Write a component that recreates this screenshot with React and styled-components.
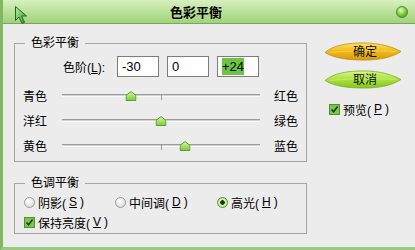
import React from 'react'
import styled, { createGlobalStyle } from 'styled-components'

const GlobalStyle = createGlobalStyle`
  html, body {
    margin: 0;
    padding: 0;
    background: #ececec;
  }
  body {
    font-family: 'Liberation Sans', 'Noto Sans CJK SC', sans-serif;
    font-size: 12px;
    color: #000;
  }
`

const sliders = [
  { left: '青色', right: '红色', value: -30 },
  { left: '洋红', right: '绿色', value: 0 },
  { left: '黄色', right: '蓝色', value: 24 },
]

const Cursor = () => (
  <CursorWrap>
    <svg width="14" height="20" viewBox="0 0 14 20">
      <defs>
        <linearGradient id="cur" x1="0" y1="0" x2="1" y2="1">
          <stop offset="0" stopColor="#b8f09a" />
          <stop offset="1" stopColor="#2e9a30" />
        </linearGradient>
      </defs>
      <path
        d="M1.5 1.5 L1.5 15.5 L5 12 L8 18.5 L10.5 17.3 L7.6 11 L12.5 11 Z"
        fill="url(#cur)"
        stroke="#1d6a1f"
        strokeWidth="1"
        strokeLinejoin="round"
      />
    </svg>
  </CursorWrap>
)

const Leaf = ({ tone }) => {
  const c =
    tone === 'gold'
      ? ['#fbe070', '#f2bc1c', '#d99a0a', '#c38a12']
      : ['#dcf68c', '#ade444', '#84c422', '#76ae1e']
  return (
    <LeafSvg viewBox="0 0 78 20" preserveAspectRatio="none">
      <defs>
        <linearGradient id={`leaf-${tone}`} x1="0" y1="0" x2="0" y2="1">
          <stop offset="0" stopColor={c[0]} />
          <stop offset="0.45" stopColor={c[1]} />
          <stop offset="1" stopColor={c[2]} />
        </linearGradient>
      </defs>
      <path
        d="M1 11 C10 3 24 1 40 1 C56 1 68 5 77 10 C68 16 56 19 40 19 C24 19 10 17 1 11 Z"
        fill={`url(#leaf-${tone})`}
        stroke={c[3]}
        strokeWidth="0.8"
      />
      <path d="M6 11 C26 9 52 9 72 10" stroke={c[0]} strokeWidth="0.7" fill="none" opacity="0.7" />
    </LeafSvg>
  )
}

const Thumb = () => (
  <svg width="11" height="10" viewBox="0 0 11 10">
    <defs>
      <linearGradient id="thumb" x1="0" y1="0" x2="0" y2="1">
        <stop offset="0" stopColor="#d8f8a0" />
        <stop offset="1" stopColor="#7cc83c" />
      </linearGradient>
    </defs>
    <polygon
      points="5.5,0.5 10.5,4.5 10.5,9.5 0.5,9.5 0.5,4.5"
      fill="url(#thumb)"
      stroke="#5c9c30"
      strokeWidth="1"
      strokeLinejoin="round"
    />
  </svg>
)

const Check = () => (
  <svg width="11" height="11" viewBox="0 0 11 11">
    <rect x="0.5" y="0.5" width="10" height="10" fill="#7cc84e" stroke="#4c9230" />
    <path d="M2.5 5.5 L4.6 7.8 L8.6 2.6" stroke="#1c3c10" strokeWidth="1.6" fill="none" />
  </svg>
)

const Slider = ({ left, right, value }) => (
  <SliderRow>
    <SideLabel>{left}</SideLabel>
    <Track>
      <Tick />
      <ThumbWrap style={{ left: `${50 + value / 2}%` }}>
        <Thumb />
      </ThumbWrap>
    </Track>
    <RightLabel>{right}</RightLabel>
  </SliderRow>
)

const App = () => {
  return (
    <>
      <GlobalStyle />
      <Window>
        <TitleBar>
          <Title>色彩平衡</Title>
          <CloseDot />
        </TitleBar>
        <Cursor />
        <Body>
          <LeftCol>
            <Group $pb={3}>
              <Legend>色彩平衡</Legend>
              <LevelRow>
                <LevelLabel>
                  色阶(<Key>L</Key>):
                </LevelLabel>
                <Field>-30</Field>
                <Field>0</Field>
                <Field>
                  <Selected>+24</Selected>
                </Field>
              </LevelRow>
              <Sliders>
                {sliders.map(s => (
                  <Slider key={s.left} {...s} />
                ))}
              </Sliders>
            </Group>
            <Group $pb={1}>
              <Legend>色调平衡</Legend>
              <OptionRow>
                <Option $w={91}>
                  <Radio />
                  阴影(<Key>S</Key>)
                </Option>
                <Option $w={102}>
                  <Radio />
                  中间调(<Key>D</Key>)
                </Option>
                <Option>
                  <Radio $on />
                  高光(<Key>H</Key>)
                </Option>
              </OptionRow>
              <OptionRow>
                <Option>
                  <Check />
                  保持亮度(<Key>V</Key>)
                </Option>
              </OptionRow>
            </Group>
          </LeftCol>
          <RightCol>
            <LeafButton>
              <Leaf tone="gold" />
              <ButtonText>确定</ButtonText>
            </LeafButton>
            <LeafButton>
              <Leaf tone="green" />
              <ButtonText>取消</ButtonText>
            </LeafButton>
            <PreviewRow>
              <Check />
              预览(<Key>P</Key>)
            </PreviewRow>
          </RightCol>
        </Body>
      </Window>
    </>
  )
}

export default App

const Window = styled.div`
  width: 415px;
  height: 250px;
  box-sizing: border-box;
  background: #ececec;
  border-left: 3px solid #82b862;
  border-bottom: 3px solid #9acb7a;
  display: flex;
  flex-direction: column;
  position: relative;
  overflow: hidden;
`
const TitleBar = styled.div`
  height: 23px;
  flex-shrink: 0;
  border-bottom: 1px solid #78a85a;
  background: linear-gradient(#d8f0c0, #b8e096 55%, #a2d27e);
  display: flex;
  align-items: center;
`
const Title = styled.div`
  flex: 1;
  text-align: center;
  font-weight: bold;
  font-size: 13px;
  padding-right: 7px;
`
const CloseDot = styled.div`
  width: 12px;
  height: 12px;
  box-sizing: border-box;
  border-radius: 50%;
  margin-right: 7px;
  border: 1px solid #4a8a28;
  background: radial-gradient(circle at 40% 32%, #e4ffc0, #74c634 55%, #3c8c1a);
`
const CursorWrap = styled.div`
  position: absolute;
  left: 11px;
  top: 5px;
  line-height: 0;
`
const Body = styled.div`
  display: flex;
  padding: 11px 0 0 11px;
`
const LeftCol = styled.div`
  width: 293px;
  display: flex;
  flex-direction: column;
  gap: 13px;
`
const Group = styled.fieldset`
  margin: 0;
  padding: 0 0 ${p => p.$pb}px;
  border: 1px solid #a6a6a6;
  min-width: 0;
`
const Legend = styled.legend`
  margin-left: 10px;
  padding: 0 6px;
  line-height: 16px;
  font-size: 12px;
`
const LevelRow = styled.div`
  display: flex;
  align-items: center;
  gap: 8px;
  margin-top: 5px;
  padding-left: 48px;
  height: 21px;
`
const LevelLabel = styled.span`
  width: 46px;
`
const Key = styled.span`
  text-decoration: underline;
`
const Field = styled.div`
  width: 42px;
  height: 21px;
  box-sizing: border-box;
  border: 1px solid #7c7c7c;
  background: #fff;
  padding-left: 4px;
  line-height: 19px;
  font-size: 13px;
`
const Selected = styled.span`
  background: #6cc444;
  padding: 1px 0;
`
const Sliders = styled.div`
  margin-top: 6px;
`
const SliderRow = styled.div`
  height: 25px;
  display: flex;
  align-items: center;
  padding-left: 8px;
`
const SideLabel = styled.span`
  width: 39px;
`
const RightLabel = styled.span`
  margin-left: 14px;
`
const Track = styled.div`
  position: relative;
  width: 198px;
  height: 3px;
  box-sizing: border-box;
  background: #d2d2d2;
  border-top: 1px solid #9c9c9c;
  border-bottom: 1px solid #fafafa;
`
const Tick = styled.div`
  position: absolute;
  left: 99px;
  top: -1px;
  width: 1px;
  height: 6px;
  background: #9a9a9a;
`
const ThumbWrap = styled.div`
  position: absolute;
  top: -4px;
  transform: translateX(-50%);
  line-height: 0;
`
const OptionRow = styled.div`
  display: flex;
  align-items: center;
  height: 20px;
  padding-left: 9px;
  &:first-of-type {
    margin-top: 1px;
  }
`
const Option = styled.label`
  display: flex;
  align-items: center;
  gap: 3px;
  width: ${p => (p.$w ? `${p.$w}px` : 'auto')};
`
const Radio = styled.span`
  width: 11px;
  height: 11px;
  box-sizing: border-box;
  border-radius: 50%;
  border: 1px solid ${p => (p.$on ? '#4f9a2e' : '#9c9c9c')};
  background: ${p =>
    p.$on
      ? 'radial-gradient(circle, #1e360e 0 2px, #dcf6c0 2.6px, #98d06a)'
      : 'radial-gradient(circle at 40% 35%, #ffffff, #d2d2d2)'};
`
const RightCol = styled.div`
  margin-left: 17px;
  padding-top: 7px;
  display: flex;
  flex-direction: column;
`
const LeafButton = styled.button`
  position: relative;
  width: 78px;
  height: 19px;
  margin: 0 0 9px;
  padding: 0 0 2px;
  border: none;
  background: none;
  font: inherit;
  font-size: 12px;
  color: #101010;
  display: flex;
  align-items: center;
  justify-content: center;
`
const LeafSvg = styled.svg`
  position: absolute;
  inset: 0;
  width: 100%;
  height: 100%;
`
const ButtonText = styled.span`
  position: relative;
  padding-left: 4px;
`
const PreviewRow = styled.label`
  display: flex;
  align-items: center;
  gap: 3px;
  height: 16px;
  margin-top: 3px;
  padding-left: 5px;
`
